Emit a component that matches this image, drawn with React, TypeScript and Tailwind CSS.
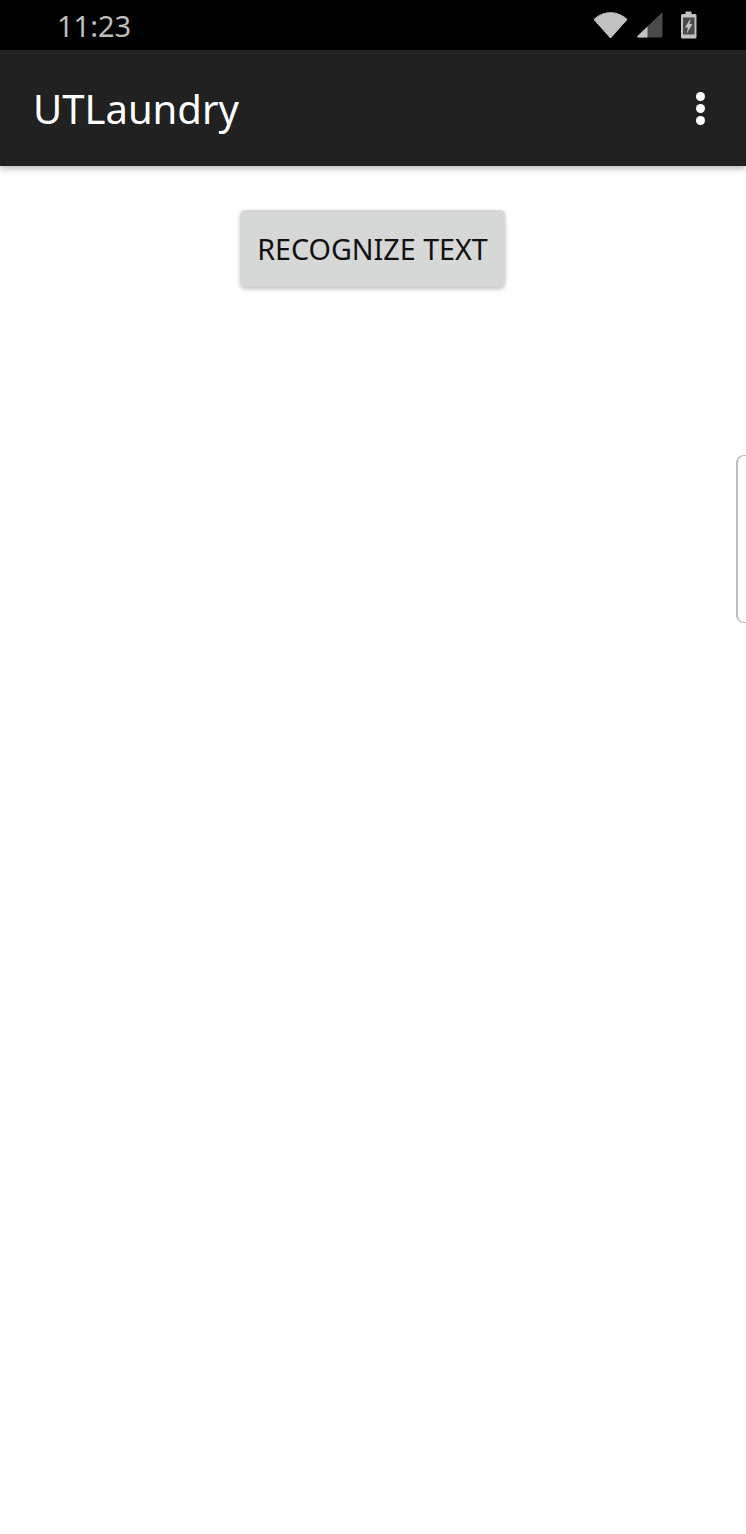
function StatusIcons() {
  return (
    <div className="flex items-center">
      <svg width="35" height="28" viewBox="0 0 35 28">
        <path d="M1 8.5 C10 -0.5 25 -0.5 34 8.5 L17.5 27 Z" fill="#c2c2c2" stroke="#c2c2c2" strokeLinejoin="round" />
      </svg>
      <svg width="28" height="28" viewBox="0 0 28 28" className="ml-[8px]">
        <path d="M26.5 1 L26.5 25 Q26.5 26.5 25 26.5 L2 26.5 Q0.5 26 1.5 25 Z" fill="#4a4a4a" />
        <path d="M11.5 15.5 L11.5 26.5 L2 26.5 Q0.5 26 1.5 25 Z" fill="#c2c2c2" />
      </svg>
      <svg width="18" height="28" viewBox="0 0 18 28" className="ml-[16px]">
        <path d="M5.5 0.5 H11.5 V3 H15 Q16.5 3 16.5 4.5 V26 Q16.5 27.5 15 27.5 H2.5 Q1 27.5 1 26 V4.5 Q1 3 2.5 3 H5.5 Z" fill="#c2c2c2" />
        <rect x="3" y="6.5" width="11.5" height="17" fill="#4a4a4a" />
        <path d="M10.5 7.5 L5 16.5 H8 L6.5 23 L12.5 13 H9.5 Z" fill="#c2c2c2" />
      </svg>
    </div>
  );
}

export default function App() {
  return (
    <div className="relative h-[1534px] overflow-hidden bg-white font-['Noto_Sans',sans-serif]">
      <div className="flex h-[50px] items-center justify-between bg-black pl-[57px] pr-[48px]">
        <span className="text-[29px] leading-none text-[#bdbdbd]">11:23</span>
        <StatusIcons />
      </div>

      <div className="flex h-[116px] items-center justify-between bg-[#212121] pl-[33px] pr-[41px] shadow-[0_3px_6px_rgba(0,0,0,0.25)]">
        <h1 className="mt-[2px] text-[40px] leading-none text-white">UTLaundry</h1>
        <div className="flex flex-col gap-[3px]">
          <span className="h-[9px] w-[9px] rounded-full bg-white" />
          <span className="h-[9px] w-[9px] rounded-full bg-white" />
          <span className="h-[9px] w-[9px] rounded-full bg-white" />
        </div>
      </div>

      <div className="flex justify-center pr-[1px] pt-[44px]">
        <button className="flex h-[77px] w-[265px] items-center justify-center rounded-[5px] bg-[#d6d7d7] pt-[2px] text-[28.7px] leading-none text-[#111111] shadow-[0_2px_4px_rgba(0,0,0,0.25)]">
          RECOGNIZE TEXT
        </button>
      </div>

      <div className="absolute right-[-10px] top-[455px] h-[168px] w-[20px] rounded-[8px] border border-l-2 border-[#bdbdbd] bg-white" />
    </div>
  );
}
